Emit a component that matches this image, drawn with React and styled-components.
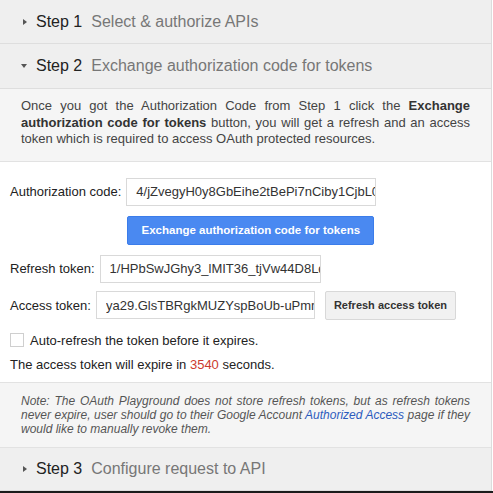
import styled, { createGlobalStyle } from "styled-components";

const GlobalStyle = createGlobalStyle`
  html, body {
    margin: 0;
    padding: 0;
    background: #fff;
  }
  body {
    font-family: "Liberation Sans", Arial, sans-serif;
    color: #222;
  }
`;

const Page = styled.div`
  display: flex;
  flex-direction: column;
  width: 493px;
  height: 493px;
  overflow: hidden;
`;

const Panel = styled.div`
  width: 491px;
  border-right: 1px solid #dcdcdc;
  display: flex;
  flex-direction: column;
`;

const StepHeader = styled.div`
  display: flex;
  align-items: center;
  height: ${(p) => p.h || 43}px;
  padding-left: 21px;
  background: #efefef;
  border-bottom: 1px solid #dedede;
  font-size: 16px;
  box-sizing: border-box;
`;

const Arrow = styled.span`
  width: 0;
  height: 0;
  margin-right: 9px;
  ${(p) =>
    p.open
      ? `border-left: 3.5px solid transparent;
         border-right: 3.5px solid transparent;
         border-top: 4px solid #555;
         margin-left: 0;`
      : `border-top: 3.5px solid transparent;
         border-bottom: 3.5px solid transparent;
         border-left: 4px solid #555;
         margin-left: 2px;`}
`;

const StepNum = styled.span`
  color: #222;
  margin-right: 9px;
`;

const StepTitle = styled.span`
  color: #777;
`;

const Description = styled.div`
  background: #f5f5f5;
  border-bottom: 1px solid #e2e2e2;
  padding: 9px 21px 13px 21px;
  font-size: 13px;
  line-height: 16.5px;
  color: #444;
  text-align: justify;

  b {
    color: #333;
  }
`;

const Content = styled.div`
  background: #fff;
  padding: 16px 10px 10px 10px;
  display: flex;
  flex-direction: column;
  height: 221px;
  box-sizing: border-box;
  border-bottom: 1px solid #e2e2e2;
`;

const AuthGrid = styled.div`
  display: grid;
  grid-template-columns: auto 250px;
  justify-content: start;
  column-gap: 5px;
  row-gap: 10px;
  align-items: center;
`;

const Row = styled.div`
  display: flex;
  align-items: center;
  gap: ${(p) => p.gap || 5}px;
  margin-top: ${(p) => p.mt || 0}px;
`;

const Label = styled.label`
  font-size: 13px;
  color: #222;
`;

const TextInput = styled.input`
  width: ${(p) => p.w}px;
  height: 28px;
  box-sizing: border-box;
  border: 1px solid #d9d9d9;
  padding: 0 0 0 9px;
  font-family: "Liberation Sans", Arial, sans-serif;
  font-size: 13px;
  color: #333;
  outline: none;
  background: #fff;
`;

const PrimaryButton = styled.button`
  grid-column: 2;
  width: 247px;
  height: 29px;
  margin-left: 1px;
  border: 1px solid #3b7cea;
  border-radius: 2px;
  background: #4a89f1;
  color: #fff;
  font-family: "Liberation Sans", Arial, sans-serif;
  font-weight: bold;
  font-size: 11.5px;
`;

const SecondaryButton = styled.button`
  height: 29px;
  width: 131px;
  border: 1px solid #d8d8d8;
  border-radius: 2px;
  background: #f1f1f1;
  color: #333;
  font-family: "Liberation Sans", Arial, sans-serif;
  font-weight: bold;
  font-size: 11px;
  margin-left: 5px;
`;

const CheckRow = styled.label`
  display: flex;
  align-items: center;
  gap: 6px;
  margin-top: 13px;
  font-size: 13px;
  color: #222;
`;

const Box = styled.span`
  width: 12px;
  height: 12px;
  border: 1px solid #cfcfcf;
  background: #fff;
`;

const Expire = styled.div`
  margin-top: 9px;
  font-size: 13px;
  color: #222;

  span {
    color: #cc3a2e;
  }
`;

const Note = styled.div`
  background: #f5f5f5;
  border-bottom: 1px solid #e2e2e2;
  padding: 11px 21px 11px 21px;
  font-size: 12px;
  line-height: 14px;
  font-style: italic;
  color: #555;
  text-align: justify;

  a {
    color: #2c5bbd;
    text-decoration: none;
  }
`;

const BottomBar = styled.div`
  flex: 1;
  background: #1b1b1b;
`;

export default function App() {
  return (
    <>
      <GlobalStyle />
      <Page>
        <Panel>
          <StepHeader h={44}>
            <Arrow />
            <StepNum>Step 1</StepNum>
            <StepTitle>Select &amp; authorize APIs</StepTitle>
          </StepHeader>
          <StepHeader h={45}>
            <Arrow open />
            <StepNum>Step 2</StepNum>
            <StepTitle>Exchange authorization code for tokens</StepTitle>
          </StepHeader>
          <Description>
            Once you got the Authorization Code from Step 1 click the{" "}
            <b>Exchange authorization code for tokens</b> button, you will get
            a refresh and an access token which is required to access OAuth
            protected resources.
          </Description>
          <Content>
            <AuthGrid>
              <Label>Authorization code:</Label>
              <TextInput
                w={250}
                readOnly
                value="4/jZvegyH0y8GbEihe2tBePi7nCiby1CjbL0kQm3xT9a"
              />
              <PrimaryButton>Exchange authorization code for tokens</PrimaryButton>
            </AuthGrid>
            <Row mt={10}>
              <Label>Refresh token:</Label>
              <TextInput
                w={221}
                readOnly
                value="1/HPbSwJGhy3_lMIT36_tjVw44D8LqWz0c"
              />
            </Row>
            <Row mt={8}>
              <Label>Access token:</Label>
              <TextInput
                w={219}
                readOnly
                value="ya29.GlsTBRgkMUZYspBoUb-uPmnA7xQ"
              />
              <SecondaryButton>Refresh access token</SecondaryButton>
            </Row>
            <CheckRow>
              <Box />
              Auto-refresh the token before it expires.
            </CheckRow>
            <Expire>
              The access token will expire in <span>3540</span> seconds.
            </Expire>
          </Content>
          <Note>
            Note: The OAuth Playground does not store refresh tokens, but as
            refresh tokens never expire, user should go to their Google Account{" "}
            <a href="#">Authorized Access</a> page if they would like to
            manually revoke them.
          </Note>
          <StepHeader h={43}>
            <Arrow />
            <StepNum>Step 3</StepNum>
            <StepTitle>Configure request to API</StepTitle>
          </StepHeader>
        </Panel>
        <BottomBar />
      </Page>
    </>
  );
}
